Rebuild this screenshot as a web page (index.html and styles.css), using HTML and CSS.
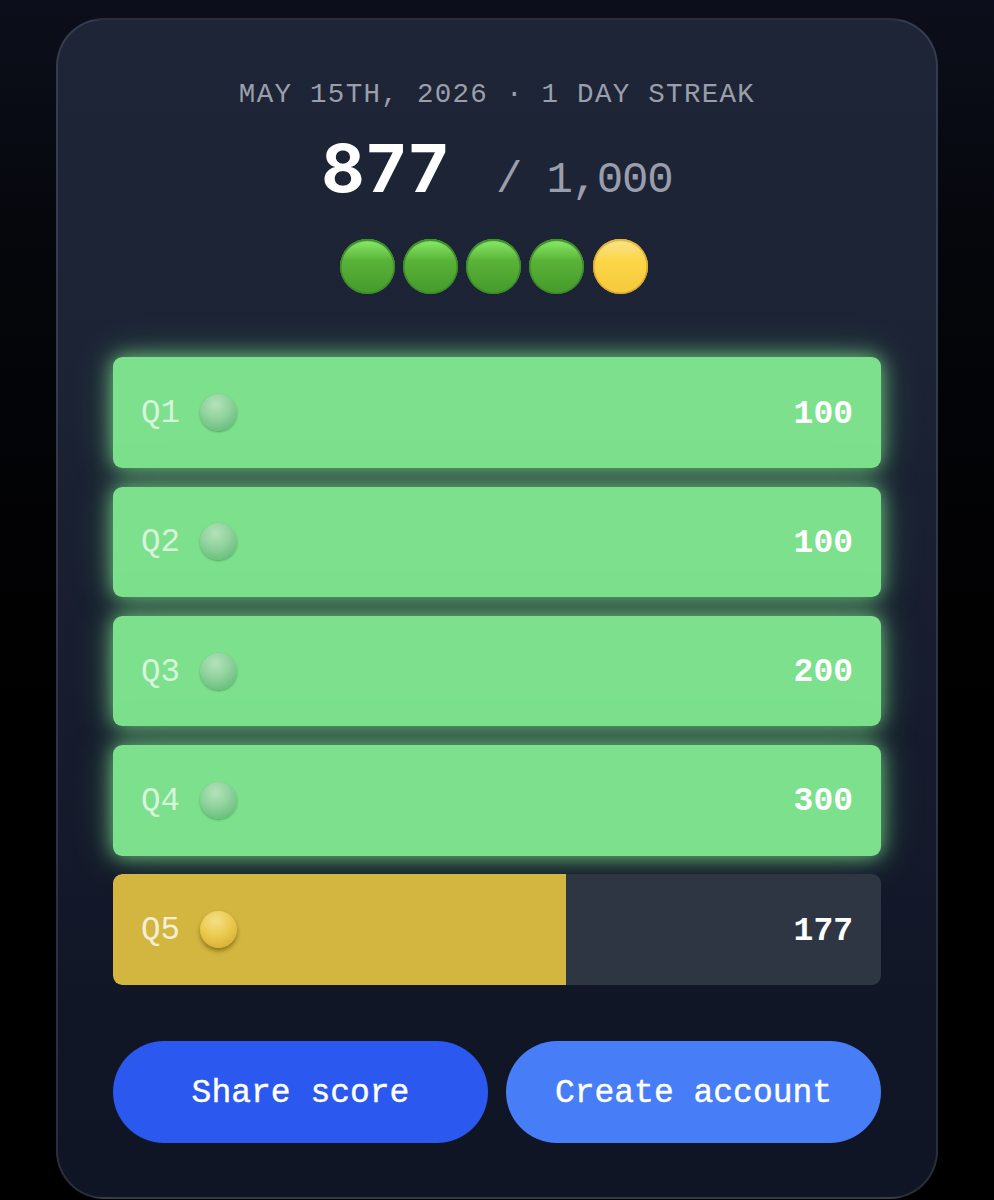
FILE: index.html
```html
<!DOCTYPE html>
<html lang="en">
<head>
<meta charset="utf-8">
<title>Score</title>
<link rel="stylesheet" href="styles.css">
</head>
<body>
<main class="card">
  <p class="date">MAY 15TH, 2026 · 1 DAY STREAK</p>
  <div class="score"><span class="score-value">877</span><span class="score-total">/ 1,000</span></div>
  <div class="dots">
    <span class="dot dot-green"></span>
    <span class="dot dot-green"></span>
    <span class="dot dot-green"></span>
    <span class="dot dot-green"></span>
    <span class="dot dot-yellow"></span>
  </div>
  <div class="rows">
    <div class="row row-green"><span class="fill" style="width:100%"></span><span class="label">Q1</span><span class="ball ball-green"></span><span class="points">100</span></div>
    <div class="row row-green"><span class="fill" style="width:100%"></span><span class="label">Q2</span><span class="ball ball-green"></span><span class="points">100</span></div>
    <div class="row row-green"><span class="fill" style="width:100%"></span><span class="label">Q3</span><span class="ball ball-green"></span><span class="points">200</span></div>
    <div class="row row-green"><span class="fill" style="width:100%"></span><span class="label">Q4</span><span class="ball ball-green"></span><span class="points">300</span></div>
    <div class="row row-yellow"><span class="fill" style="width:59%"></span><span class="label">Q5</span><span class="ball ball-yellow"></span><span class="points">177</span></div>
  </div>
  <div class="actions">
    <button class="btn btn-share">Share score</button>
    <button class="btn btn-create">Create account</button>
  </div>
</main>
</body>
</html>
```
FILE: styles.css
```css
* { box-sizing: border-box; }
html, body { height: 100%; }
body {
  margin: 0;
  height: 1200px;
  overflow: hidden;
  background:
    linear-gradient(180deg, #0c0f1b 0, #05060b 260px, #000 700px);
  font-family: "Liberation Mono", monospace;
}
.card {
  margin: 18px 56px 0;
  height: 1181px;
  padding: 58px 55px 0;
  border: 2px solid rgba(255, 255, 255, 0.11);
  border-radius: 48px;
  background: linear-gradient(180deg, #1e2537 0, #1c2335 330px, #111627 1000px, #101525 100%);
}
.date {
  margin: 0;
  height: 34px;
  text-align: center;
  font-size: 27.5px;
  line-height: 34px;
  letter-spacing: 1.3px;
  color: #9a9fab;
}
.score {
  margin-top: 20px;
  height: 72px;
  display: flex;
  justify-content: center;
  align-items: baseline;
  gap: 46px;
}
.score-value {
  font-family: Inter, sans-serif;
  font-size: 66px;
  line-height: 72px;
  font-weight: 700;
  letter-spacing: 2.5px;
  color: #fff;
}
.score-total {
  font-size: 44px;
  letter-spacing: -1.2px;
  color: #9a9eac;
}
.dots {
  margin-top: 35px;
  padding-right: 7px;
  display: flex;
  justify-content: center;
  gap: 8.25px;
}
.dot {
  width: 55px;
  height: 55px;
  border-radius: 50%;
}
.dot-green {
  background: linear-gradient(180deg, #85e664 5%, #59b238 40%, #459a2b 100%);
  box-shadow: inset 0 2px 1px #3f8f2c, inset 0 0 0 1.5px #3d8a2b;
}
.dot-yellow {
  background: linear-gradient(180deg, #f8e28a 5%, #fdd648 38%, #f5c93c 100%);
  box-shadow: inset 0 2px 1px #e4b63a, inset 0 0 0 1.5px #d9a833;
}
.rows {
  margin-top: 63.3px;
  display: flex;
  flex-direction: column;
  gap: 18.7px;
}
.row {
  position: relative;
  height: 110.6px;
  padding: 0 28px;
  display: flex;
  align-items: center;
  border-radius: 9px;
  overflow: hidden;
  background: #2e3543;
}
.row-green {
  overflow: visible;
  box-shadow: 0 0 20px rgba(124, 226, 140, 0.85), 0 0 44px rgba(124, 226, 140, 0.3);
}
.fill { position: absolute; left: 0; top: 0; bottom: 0; border-radius: 9px 0 0 9px; }
.row-green .fill { border-radius: 9px; background: #7ce08c; }
.row-yellow .fill { background: #d2b640; }
.label {
  position: relative;
  padding-top: 2px;
  font-size: 32.5px;
  color: rgba(255, 255, 255, 0.7);
}
.row-yellow .label { color: rgba(255, 255, 255, 0.8); }
.ball {
  position: relative;
  margin-left: 20px;
  width: 37px;
  height: 37px;
  border-radius: 50%;
}
.ball-green {
  background: radial-gradient(circle at 42% 28%, #b4e2bb 0, #94d4a0 38%, #6fc283 75%, #58ae6f 100%);
  box-shadow: 0 1px 2px rgba(40, 110, 60, 0.5);
}
.ball-yellow {
  background: radial-gradient(circle at 42% 26%, #f4df88 0, #ebcc52 42%, #dcb338 78%, #c99c26 100%);
  box-shadow: 0 3px 4px rgba(100, 75, 10, 0.6);
}
.points {
  position: relative;
  margin-left: auto;
  padding-top: 3px;
  font-size: 33px;
  font-weight: 700;
  color: #fff;
}
.actions {
  margin-top: 55.7px;
  display: flex;
  gap: 18px;
}
.btn {
  flex: 1;
  height: 102px;
  padding-top: 5px;
  border: 0;
  border-radius: 51px;
  font-family: "Liberation Mono", monospace;
  font-size: 33px;
  -webkit-text-stroke: 0.4px #fff;
  color: #fff;
}
.btn-share { background: #2b59f0; }
.btn-create { background: #477ef7; }
```
